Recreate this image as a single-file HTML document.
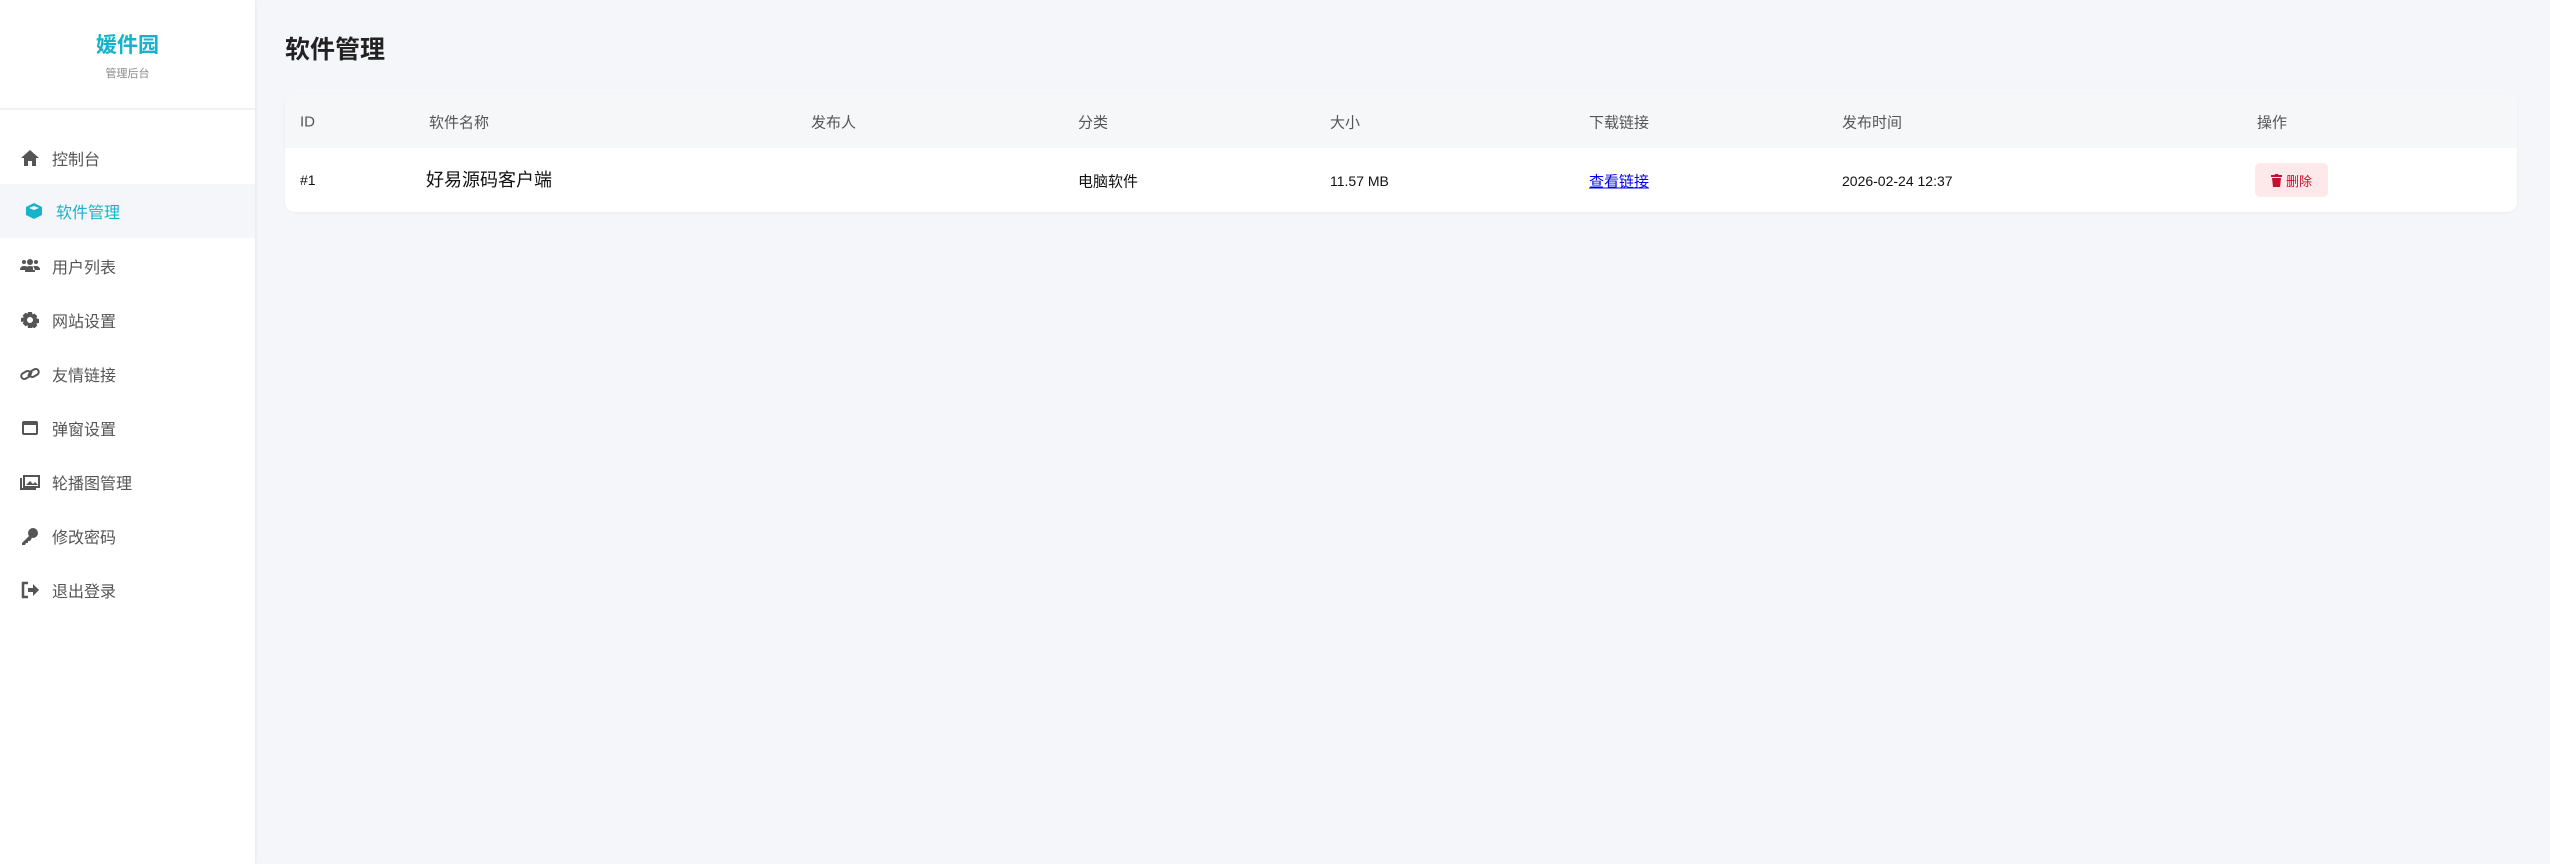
<!DOCTYPE html>
<html><head><meta charset="utf-8"><style>
*{margin:0;padding:0;box-sizing:border-box}
body{width:2550px;height:864px;background:#f5f6fa;font-family:"Liberation Sans","Noto Sans CJK SC",sans-serif;position:relative;overflow:hidden}
.side{position:absolute;left:0;top:0;width:255px;height:864px;background:#fff;box-shadow:1px 0 3px rgba(0,0,0,.06)}
.logo{height:110px;border-bottom:2px solid #f1f2f4;text-align:center}
.logo .t{position:absolute;left:0;width:255px;top:29px;font-size:21px;font-weight:bold;color:#17b3cc}
.logo .s{position:absolute;left:0;width:255px;top:65px;font-size:11px;color:#888}
.nav{position:absolute;left:0;width:255px;height:54px;font-size:16px;color:#555;display:flex;align-items:center}
.nav svg{position:absolute;left:20px;width:20px;height:20px;fill:#555}
.nav span{position:absolute;left:52px}
.nav.act{background:#f5f6fa;color:#17b3cc}
.nav.act svg{left:24px;fill:#17b3cc}
.nav.act span{left:56px}
h1{position:absolute;left:285px;top:30px;font-size:25px;font-weight:bold;color:#222}
.card{position:absolute;left:285px;top:94px;width:2232px;height:118px;background:#fff;border-radius:10px;overflow:hidden;box-shadow:0 1px 3px rgba(0,0,0,.04)}
.hd{position:absolute;left:0;top:0;width:100%;height:54px;background:#f6f7f9}
.c{position:absolute;font-size:15px;color:#555;transform:translateY(-50%)}
.r{color:#111}
.del{position:absolute;left:1970px;top:69px;width:73px;height:34px;background:#fde9ea;border-radius:5px;color:#c8102e;font-size:13px;display:flex;align-items:center;justify-content:center;gap:4px}
</style></head><body>
<div class="side">
<div class="logo"><div class="t">媛件园</div><div class="s">管理后台</div></div>
<div class="nav" style="top:131px"><svg viewBox="0 0 20 20"><path d="M10 2L1 10h3v8h4v-5h4v5h4v-8h3z"/></svg><span>控制台</span></div>
<div class="nav act" style="top:184px"><svg viewBox="0 0 20 20"><path d="M10 2l8 4v8l-8 4-8-4V6zM10 5L5 7l5 2 5-2z"/></svg><span>软件管理</span></div>
<div class="nav" style="top:239px"><svg viewBox="0 0 20 20"><circle cx="4" cy="6" r="2"/><circle cx="16" cy="6" r="2"/><circle cx="10" cy="6" r="3"/><path d="M0 14q0-4 4-4t3 2v2zM20 14q0-4-4-4t-3 2v2zM5 16q0-6 5-6t5 6z"/></svg><span>用户列表</span></div>
<div class="nav" style="top:293px"><svg viewBox="0 0 20 20"><path d="M8 2h4l.5 2.5 2-1 2.8 2.8-1 2 2.7.7v4l-2.7.5 1 2-2.8 2.8-2-1L12 18H8l-.5-2.7-2 1-2.8-2.8 1-2L1 12V8l2.7-.5-1-2 2.8-2.8 2 1zM10 7a3 3 0 100 6 3 3 0 000-6z"/></svg><span>网站设置</span></div>
<div class="nav" style="top:347px"><svg viewBox="0 0 20 20"><path d="M8 12l4-4" stroke="#555" stroke-width="2" fill="none"/><rect x="1" y="8" width="10" height="6" rx="3" transform="rotate(-30 6 11)" fill="none" stroke="#555" stroke-width="2"/><rect x="9" y="6" width="10" height="6" rx="3" transform="rotate(-30 14 9)" fill="none" stroke="#555" stroke-width="2"/></svg><span>友情链接</span></div>
<div class="nav" style="top:401px"><svg viewBox="0 0 20 20"><rect x="2" y="3" width="16" height="14" rx="2"/><rect x="4" y="7" width="12" height="8" fill="#fff"/></svg><span>弹窗设置</span></div>
<div class="nav" style="top:455px"><svg viewBox="0 0 20 20"><path d="M4 4h15v11H4z" fill="none" stroke="#555" stroke-width="2"/><path d="M1 6v11h15" fill="none" stroke="#555" stroke-width="2"/><path d="M6 13l4-4 3 3 2-2 3 3z"/></svg><span>轮播图管理</span></div>
<div class="nav" style="top:509px"><svg viewBox="0 0 20 20"><circle cx="13" cy="7" r="5"/><path d="M9 10l-7 7v2h3l1-2h2v-2h2l2-3z"/></svg><span>修改密码</span></div>
<div class="nav" style="top:563px"><svg viewBox="0 0 20 20"><path d="M8 3H3v14h5" fill="none" stroke="#555" stroke-width="2.5"/><path d="M8 8h5V4l6 6-6 6v-4H8z"/></svg><span>退出登录</span></div>
</div>
<h1>软件管理</h1>
<div class="card"><div class="hd"></div>
<div class="c" style="left:15px;top:28px">ID</div>
<div class="c" style="left:144px;top:28px">软件名称</div>
<div class="c" style="left:526px;top:28px">发布人</div>
<div class="c" style="left:793px;top:28px">分类</div>
<div class="c" style="left:1045px;top:28px">大小</div>
<div class="c" style="left:1304px;top:28px">下载链接</div>
<div class="c" style="left:1557px;top:28px">发布时间</div>
<div class="c" style="left:1972px;top:28px">操作</div>
<div class="c r" style="left:15px;top:86px;font-size:14px">#1</div>
<div class="c r" style="left:141px;top:85px;font-size:18px">好易源码客户端</div>
<div class="c r" style="left:793px;top:87px">电脑软件</div>
<div class="c r" style="left:1045px;top:87px;font-size:14px">11.57 MB</div>
<div class="c" style="left:1304px;top:87px;color:#0000ee;text-decoration:underline">查看链接</div>
<div class="c r" style="left:1557px;top:87px;font-size:14px">2026-02-24 12:37</div>
<div class="del"><svg width="11" height="13" viewBox="0 0 11 13"><path d="M0 1h3.5l.5-1h3l.5 1H11v2H0zM1 4h9l-1 9H2z" fill="#c8102e"/></svg>删除</div>
</div>
</body></html>
